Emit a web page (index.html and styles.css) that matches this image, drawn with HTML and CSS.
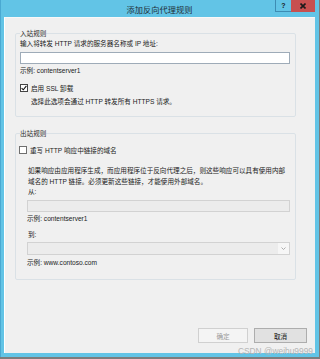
FILE: index.html
```html
<!DOCTYPE html>
<html lang="zh">
<head>
    <meta charset="UTF-8" />
    <title>添加反向代理规则</title>
    <link rel="stylesheet" href="styles.css">
</head>
<body>
    <div class="window">
        <!-- 标题栏 -->
        <div class="titlebar">
            <span></span>
            <span class="title">添加反向代理规则</span>
            <div class="controls">
                <span class="btn-help">?</span>
                <span class="btn-close">
                    <svg width="6" height="6" viewBox="0 0 6 6"><path d="M0.5 0.5 L5.5 5.5 M5.5 0.5 L0.5 5.5" stroke="#1a1a1a" stroke-width="1.6" /></svg>
                </span>
            </div>
        </div>

        <div class="client">
            <!-- 入站规则 -->
            <fieldset class="group inbound">
                <legend>入站规则</legend>
                <div class="line">输入将转发 HTTP 请求的服务器名称或 IP 地址:</div>
                <div class="textbox"></div>
                <div class="line hint">示例: contentserver1</div>
                <div class="check-row">
                    <span class="box">
                        <svg width="6" height="6" viewBox="0 0 6 6"><path d="M0.6 3.1 L2.3 4.8 L5.4 0.9" fill="none" stroke="#111" stroke-width="1.1" /></svg>
                    </span>
                    启用 SSL 卸载
                </div>
                <div class="line sub">选择此选项会通过 HTTP 转发所有 HTTPS 请求。</div>
            </fieldset>

            <!-- 出站规则 -->
            <fieldset class="group outbound">
                <legend>出站规则</legend>
                <div class="check-row"><span class="box"></span>重写 HTTP 响应中链接的域名</div>
                <div class="indent">
                    <p class="para">如果响应由应用程序生成，而应用程序位于反向代理之后，则这些响应可以具有使用内部域名的 HTTP 链接。必须更新这些链接，才能使用外部域名。</p>
                    <div class="line">从:</div>
                    <div class="textbox disabled"></div>
                    <div class="line hint">示例: contentserver1</div>
                    <div class="line to">到:</div>
                    <div class="combo">
                        <span class="combo-text"></span>
                        <span class="combo-arrow">
                            <svg width="5" height="3" viewBox="0 0 5 3"><path d="M0.5 0.5 L2.5 2.5 L4.5 0.5" fill="none" stroke="#999" stroke-width="0.8" /></svg>
                        </span>
                    </div>
                    <div class="line hint last">示例: www.contoso.com</div>
                </div>
            </fieldset>

            <div class="actions">
                <button class="ok" disabled>确定</button>
                <button class="cancel">取消</button>
            </div>
        </div>
    </div>
    <div class="watermark">CSDN @weihu9999</div>
</body>
</html>
```

FILE: styles.css
```css
body {
    margin: 0;
    width: 320px;
    height: 359px;
    background: #7d7d7d;
    font-family: "Liberation Sans", "Noto Sans CJK SC", sans-serif;
    font-size: 6.6px;
    color: #1b1b1b;
    position: relative;
    overflow: hidden;
}
.window {
    width: 319px;
    height: 357px;
    box-sizing: border-box;
    background: #62c4e6;
    border-left: 1px solid #4aa9d2;
    padding: 0 4px 4px 3px;
    display: flex;
    flex-direction: column;
}
.titlebar {
    height: 17px;
    display: grid;
    grid-template-columns: 1fr auto 1fr;
    align-items: start;
}
.title {
    font-family: "Noto Sans CJK SC", sans-serif;
    font-size: 8.2px;
    line-height: 19px;
    color: #1f2f38;
    letter-spacing: 0.05px;
}
.controls {
    display: flex;
    justify-content: flex-end;
}
.btn-help {
    width: 16px;
    height: 12px;
    box-sizing: border-box;
    border: 1px solid #3d8cb3;
    border-top: none;
    border-right: none;
    font-weight: bold;
    font-size: 7px;
    line-height: 11px;
    text-align: center;
    color: #1a1a1a;
}
.btn-close {
    width: 24px;
    height: 12px;
    background: #c75050;
    display: flex;
    align-items: center;
    justify-content: center;
}
.client {
    flex: 1;
    background: #f0f0f0;
    border-left: 1px solid #ffffff;
    border-top: 1px solid #f8f8f8;
    display: flex;
    flex-direction: column;
}
/* 分组框 */
.group {
    width: 281px;
    box-sizing: border-box;
    margin: 11px 0 0 10px;
    padding: 0 5px 9px 4px;
    border: 1px solid #dae1e6;
    border-radius: 2px;
    min-width: 0;
}
.group legend {
    padding: 0;
    margin: 0;
    line-height: 9px;
    font-family: "Noto Sans CJK SC", sans-serif;
    color: #2a2a2a;
}
.line {
    line-height: 10px;
    white-space: nowrap;
}
.inbound .line:first-of-type {
    margin-top: 1px;
}
.textbox {
    height: 12px;
    margin-top: 3px;
    box-sizing: border-box;
    background: #ffffff;
    border: 1px solid #9eabb8;
}
.textbox.disabled {
    background: #ececec;
    border-color: #d2d2d2;
}
.hint {
    margin-top: 2px;
}
.check-row {
    display: flex;
    align-items: center;
    height: 10px;
    margin-top: 7px;
}
.box {
    width: 8px;
    height: 8px;
    box-sizing: border-box;
    border: 1px solid #444;
    background: #fff;
    margin-right: 3px;
    display: flex;
    align-items: center;
    justify-content: center;
}
.sub {
    margin-top: 4px;
    padding-left: 11px;
}
.outbound {
    margin-top: 12px;
    padding-bottom: 11px;
}
.outbound .check-row {
    margin-top: 7px;
    margin-left: -1px;
}
.outbound .box {
    border-color: #6f6f6f;
}
.indent {
    padding-left: 7px;
}
.para {
    margin: 10px 0 0 1px;
    line-height: 11px;
    width: 262px;
}
.indent > .line:not(.hint) {
    padding-left: 1px;
}
.to {
    margin-top: 6px;
}
.combo {
    height: 13px;
    margin-top: 2px;
    box-sizing: border-box;
    border: 1px solid #d2d2d2;
    display: flex;
}
.combo-text {
    flex: 1;
    background: #ececec;
}
.combo-arrow {
    width: 11px;
    background: #f6f6f6;
    display: flex;
    align-items: center;
    justify-content: center;
}
.last {
    margin-top: 3px;
}
/* 底部按钮 */
.actions {
    display: flex;
    justify-content: flex-end;
    gap: 6px;
    margin-top: 48px;
    padding-right: 8px;
}
.actions button {
    height: 15px;
    padding: 0;
    font-family: "Noto Sans CJK SC", sans-serif;
    font-size: 6.6px;
    border-radius: 0;
}
.ok {
    width: 50px;
    background: #f4f4f4;
    border: 1px solid #d0d0d0;
    color: #9a9a9a;
}
.cancel {
    width: 53px;
    background: #e1e1e1;
    border: 1px solid #adadad;
    color: #111;
}
.watermark {
    position: absolute;
    right: 7px;
    bottom: 3px;
    font-family: "Liberation Sans", sans-serif;
    font-size: 8.4px;
    line-height: 10px;
    color: #b4b4b4;
}
```
